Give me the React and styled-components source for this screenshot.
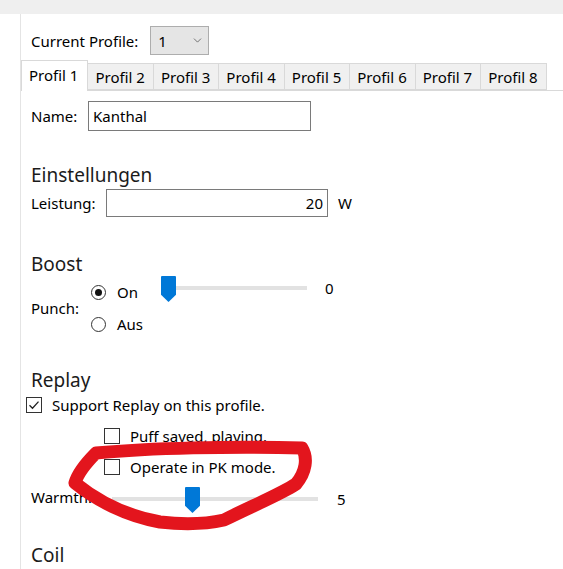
import React from 'react';
import styled, { createGlobalStyle } from 'styled-components';
import { ChevronDown } from 'lucide-react';

const GlobalStyle = createGlobalStyle`
  html, body {
    margin: 0;
    padding: 0;
    background: #fff;
  }
  body {
    font-family: "Noto Sans", "Open Sans", sans-serif;
    font-size: 15px;
    color: #000;
  }
`;

const profiles = [1, 2, 3, 4, 5, 6, 7, 8];

const App = () => {
    return (
        <>
            <GlobalStyle />
            <Window>
                <TitleBand />
                <Frame>
                    <Gutter />
                    <Panel>
                        <Header>
                            <Text>Current Profile:</Text>
                            <Combo>
                                <span>1</span>
                                <ChevronDown size={13} strokeWidth={1.3} color="#444" />
                            </Combo>
                        </Header>

                        <TabStrip>
                            {profiles.map(n => (
                                <Tab key={n} $active={n === 1}>Profil {n}</Tab>
                            ))}
                        </TabStrip>

                        <Content>
                            <FieldRow $top={10} $height={30}>
                                <Label $w={57}>Name:</Label>
                                <TextBox $w={223} $h={30} readOnly value="Kanthal" />
                            </FieldRow>

                            <Heading $top={32}>Einstellungen</Heading>
                            <FieldRow $top={2} $height={28}>
                                <Label $w={75}>Leistung:</Label>
                                <TextBox $w={222} $h={28} $align="right" readOnly value="20" />
                                <Unit>W</Unit>
                            </FieldRow>

                            <Heading $top={35}>Boost</Heading>
                            <PunchGroup>
                                <PunchChoice>
                                    <Label $w={60}>Punch:</Label>
                                    <RadioStack>
                                        <Choice><Radio $checked />On</Choice>
                                        <Choice><Radio />Aus</Choice>
                                    </RadioStack>
                                </PunchChoice>
                                <Slider width={146} value={0} max={13} />
                                <Value $gap={18}>0</Value>
                            </PunchGroup>

                            <Heading $top={28}>Replay</Heading>
                            <CheckRow $top={2} $indent={-5}>
                                <CheckBox $checked>
                                    <svg width="12" height="12" viewBox="0 0 12 12">
                                        <path d="M1.5 6.2 L4.5 9.2 L10.5 2.6" fill="none" stroke="#222" strokeWidth="1.3" />
                                    </svg>
                                </CheckBox>
                                Support Replay on this profile.
                            </CheckRow>
                            <CheckRow $top={9} $indent={73}>
                                <CheckBox />
                                Puff saved, playing.
                            </CheckRow>
                            <CheckRow $top={9} $indent={73}>
                                <CheckBox />
                                Operate in PK mode.
                            </CheckRow>

                            <SliderRow $top={9}>
                                <Label $w={81}>Warmth:</Label>
                                <Slider width={206} value={5} max={13} />
                                <Value $gap={19}>5</Value>
                            </SliderRow>

                            <Heading $top={30}>Coil</Heading>
                        </Content>
                    </Panel>
                </Frame>

                {/* hand-drawn red marker ring */}
                <Marker width="563" height="569" viewBox="0 0 563 569">
                    <path
                        d="M 302 448 C 232 446, 150 448, 96 453 C 87 462, 78 472, 75 483 C 96 500, 126 516, 160 522 C 186 525, 206 524, 224 520 C 252 506, 281 494, 296 484 C 306 472, 308 458, 302 448 Z"
                        fill="none"
                        stroke="#e3151d"
                        strokeWidth="13"
                        strokeLinejoin="round"
                        strokeLinecap="round"
                    />
                </Marker>
            </Window>
        </>
    );
};

// Trackbar with a downward pointing thumb.
const Slider = ({ width, value, max }) => {
    const thumb = 15;
    const left = Math.round((value / max) * (width - thumb));
    return (
        <SliderBox $w={width}>
            <Track />
            <Thumb style={{ left }} />
        </SliderBox>
    );
};

const Window = styled.div`
    position: relative;
    width: 563px;
    height: 569px;
    overflow: hidden;
`;

const TitleBand = styled.div`
    height: 14px;
    background: #efefef;
`;

const Frame = styled.div`
    display: flex;
    height: 555px;
`;

const Gutter = styled.div`
    width: 20px;
    flex: none;
`;

const Panel = styled.div`
    flex: 1;
    border-left: 1px solid #e4e4e4;
    display: flex;
    flex-direction: column;
`;

const Header = styled.div`
    display: flex;
    align-items: center;
    gap: 12px;
    padding: 12px 0 0 10px;
`;

const Text = styled.span`
    line-height: 20px;
`;

const Combo = styled.div`
    box-sizing: border-box;
    width: 59px;
    height: 29px;
    display: flex;
    align-items: center;
    justify-content: space-between;
    padding: 0 4px 0 7px;
    background: #e5e5e5;
    border: 1px solid #adadad;
`;

const TabStrip = styled.div`
    box-sizing: border-box;
    margin-top: 5px;
    height: 31px;
    display: flex;
    align-items: flex-end;
    border-bottom: 1px solid #d9d9d9;
`;

const Tab = styled.div`
    box-sizing: border-box;
    height: ${p => (p.$active ? '31px' : '27px')};
    margin-bottom: ${p => (p.$active ? '-1px' : '0')};
    margin-left: -1px;
    padding: ${p => (p.$active ? '0 9px 3px 7px' : '1px 8px 0 7px')};
    display: flex;
    align-items: center;
    border: 1px solid #d9d9d9;
    border-bottom: ${p => (p.$active ? 'none' : '1px solid #d9d9d9')};
    background: ${p => (p.$active ? '#fff' : '#f0f0f0')};
    white-space: nowrap;
    position: relative;
    z-index: ${p => (p.$active ? 1 : 0)};

    &:first-child {
        margin-left: 0;
    }
`;

const Content = styled.div`
    display: flex;
    flex-direction: column;
    padding-left: 10px;
`;

const FieldRow = styled.div`
    display: flex;
    align-items: center;
    margin-top: ${p => p.$top}px;
    height: ${p => p.$height}px;
`;

const Label = styled.span`
    width: ${p => p.$w}px;
    flex: none;
    line-height: 20px;
    white-space: nowrap;
`;

const TextBox = styled.input`
    box-sizing: border-box;
    width: ${p => p.$w}px;
    height: ${p => p.$h}px;
    border: 1px solid #7a7a7a;
    padding: 0 4px;
    margin: 0;
    font: inherit;
    color: #000;
    outline: none;
    text-align: ${p => p.$align || 'left'};
`;

const Unit = styled.span`
    margin-left: 10px;
`;

const Heading = styled.div`
    margin-top: ${p => p.$top}px;
    font-size: 19px;
    line-height: 24px;
    color: #1b1b1b;
`;

const PunchGroup = styled.div`
    display: flex;
    align-items: flex-start;
`;

const PunchChoice = styled.div`
    display: flex;
    align-items: center;
`;

const RadioStack = styled.div`
    width: 70px;
    display: flex;
    flex-direction: column;
`;

const Choice = styled.div`
    height: 32px;
    display: flex;
    align-items: center;
    gap: 11px;
`;

const Radio = styled.span`
    box-sizing: border-box;
    width: 15px;
    height: 15px;
    border-radius: 50%;
    border: 1px solid #333;
    display: flex;
    align-items: center;
    justify-content: center;

    &::after {
        content: '';
        width: 7px;
        height: 7px;
        border-radius: 50%;
        background: #111;
        display: ${p => (p.$checked ? 'block' : 'none')};
    }
`;

const SliderBox = styled.div`
    position: relative;
    width: ${p => p.$w}px;
    height: 26px;
    flex: none;
    margin-top: ${p => p.$top || 0}px;
`;

const Track = styled.div`
    position: absolute;
    left: 0;
    right: 0;
    top: 10px;
    height: 4px;
    background: #e2e2e2;
`;

const Thumb = styled.div`
    position: absolute;
    top: 0;
    width: 15px;
    height: 26px;
    background: #0078d7;
    border-radius: 1px 1px 0 0;
    clip-path: polygon(0 0, 100% 0, 100% 72%, 50% 100%, 0 72%);
`;

const Value = styled.span`
    margin-left: ${p => p.$gap}px;
    line-height: 24px;
`;

const CheckRow = styled.div`
    display: flex;
    align-items: center;
    gap: 10px;
    height: 22px;
    margin-top: ${p => p.$top}px;
    margin-left: ${p => p.$indent}px;
    white-space: nowrap;
`;

const CheckBox = styled.span`
    box-sizing: border-box;
    width: 16px;
    height: 16px;
    flex: none;
    border: 1px solid #333;
    background: #fff;
    display: flex;
    align-items: center;
    justify-content: center;
`;

const SliderRow = styled.div`
    display: flex;
    align-items: flex-start;
    margin-top: ${p => p.$top}px;
`;

const Marker = styled.svg`
    position: absolute;
    top: 0;
    left: 0;
    pointer-events: none;
`;

export default App;
